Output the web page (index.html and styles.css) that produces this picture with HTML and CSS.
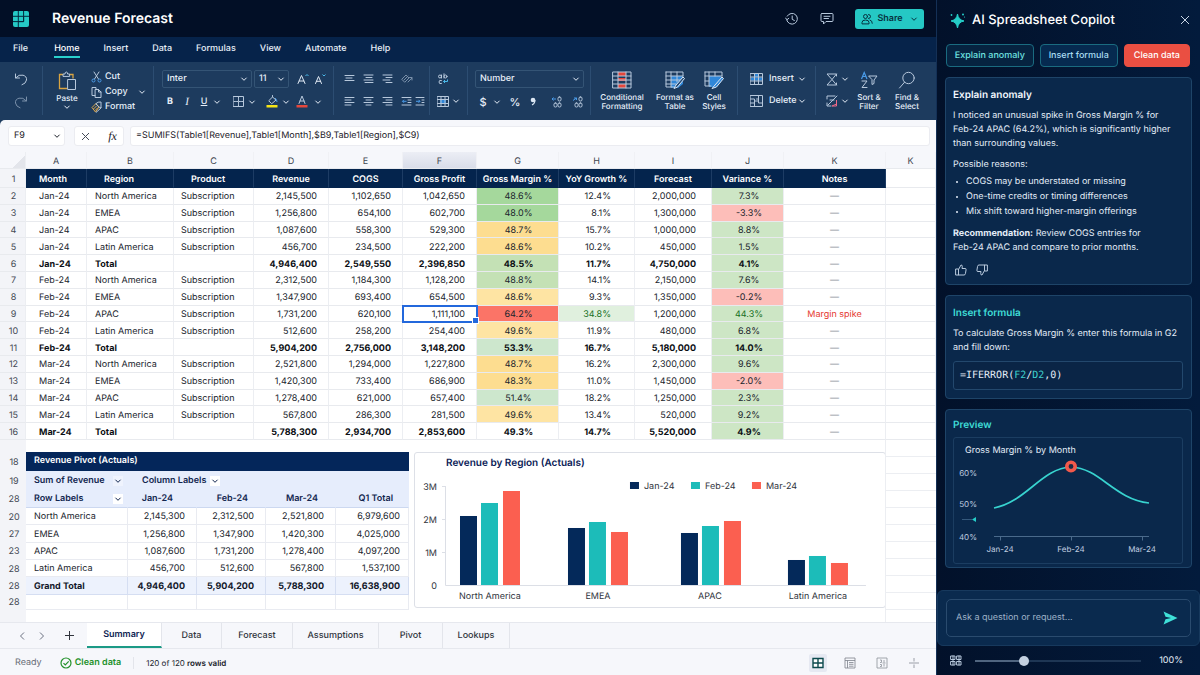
FILE: index.html
```html
<!DOCTYPE html>
<html lang="en">
<head>
<meta charset="utf-8">
<title>Revenue Forecast</title>
<link rel="stylesheet" href="styles.css">
</head>
<body>
<svg class="defs" aria-hidden="true">
  <symbol id="chev" viewBox="0 0 8 8"><path d="M1.700 3l2.300 2.300L6.300 3" fill="none" stroke="currentColor" stroke-width="1" stroke-linecap="round" stroke-linejoin="round"/></symbol>
</svg>
<div class="app">
<div class="workbook">
  <header class="titlebar">
    <svg class="logo" viewBox="0 0 16 16"><rect width="16" height="16" rx="2" fill="#25c9c5"/><path d="M5.300 0v16M10.600 0v10.600M0 5.300h16M0 10.600h10.600" stroke="#04283c" stroke-width="1"/><path d="M10.600 5.300v5.300h-5.300" stroke="#04283c" fill="none"/></svg>
    <h1>Revenue Forecast</h1>
    <div class="title-actions">
      <button class="ghost" aria-label="Version history"><svg width="14" height="14" viewBox="0 0 14 14"><path d="M2.200 4.200A5.400 5.400 0 1 1 1.700 8M.6 6l1.300 1.800L3.800 6.300M7.200 4v3.300l2.200 1.200" class="ln"/></svg></button>
      <button class="ghost" aria-label="Comments"><svg width="14" height="14" viewBox="0 0 14 14"><path d="M2 1.500h10q1 0 1 1v6q0 1-1 1H6L3.500 12V9.500H2q-1 0-1-1v-6q0-1 1-1zM4 4.300h6M4 6.500h4.500" class="ln"/></svg></button>
      <button class="share"><svg width="12" height="12" viewBox="0 0 12 12"><g fill="none" stroke="currentColor" stroke-linecap="round"><circle cx="4.500" cy="3.500" r="2"/><path d="M1 10.500v-1q0-2.500 3.500-2.500T8 9.500v1zM7.500 1.500a2 2 0 0 1 0 4M9 7q2.300.5 2.300 3.300"/></g></svg>Share<svg class="chev"><use href="#chev"/></svg></button>
    </div>
  </header>
  <nav class="menu">
    <a href="#">File</a><a href="#" class="on">Home</a><a href="#">Insert</a><a href="#">Data</a><a href="#">Formulas</a><a href="#">View</a><a href="#">Automate</a><a href="#">Help</a>
  </nav>
  <div class="ribbon">
    <div class="group g-undo">
      <button aria-label="Undo"><svg width="14" height="14" viewBox="0 0 14 14"><path d="M1.500 2v4h4M1.800 5.800Q5 2 9 3.200T12.500 8 8 12.800" class="ln"/></svg></button>
      <button aria-label="Redo" class="dim"><svg width="14" height="14" viewBox="0 0 14 14"><path d="M12.500 2v4h-4M12.200 5.800Q9 2 5 3.200T1.500 8 6 12.800" class="ln"/></svg></button>
    </div>
    <div class="group g-clip">
      <button class="big paste"><svg width="20" height="20" viewBox="0 0 20 20"><path d="M6 3.500H2.500v14H10M12.500 3.500H16v4" fill="none" stroke="#d9a441" stroke-width="1.300"/><path d="M6 5V3h2Q8 1 9.300 1T10.600 3h2v2zM11 8.500h7.500v10H11z" class="ln"/></svg>Paste<svg class="chev"><use href="#chev"/></svg></button>
      <div class="stack">
        <button><svg width="11" height="12" viewBox="0 0 11 12"><path d="M3 1l4.500 7M8 1L3.500 8" class="ln"/><g fill="none" stroke="#4a9be8"><circle cx="2.500" cy="9.500" r="1.500"/><circle cx="8.500" cy="9.500" r="1.500"/></g></svg>Cut</button>
        <button><svg width="11" height="12" viewBox="0 0 11 12"><path d="M4 9.500H1v-8h4v2M4.500 3.500h3L10 6v5.500H4.500zM7.500 3.500V6H10" class="ln"/></svg>Copy<svg class="chev"><use href="#chev"/></svg></button>
        <button><svg width="11" height="12" viewBox="0 0 11 12"><path d="M1 6.500L5 2.500l3 3.500-3.500 5zM2.500 8l3-3M4 9.500l3-3" fill="none" stroke="#e0a94c"/><path d="M5 2.500Q7 .5 10 1v6L8 6zM10 7l-5 4.500" class="ln"/></svg>Format</button>
      </div>
    </div>
    <div class="group g-font">
      <div class="row">
        <span class="pick font"><select aria-label="Font"><option>Inter</option></select><svg class="chev"><use href="#chev"/></svg></span>
        <span class="pick size"><select aria-label="Font size"><option>11</option></select><svg class="chev"><use href="#chev"/></svg></span>
        <button class="aa" aria-label="Grow font"><svg width="12" height="12" viewBox="0 0 12 12"><path d="M1 10.500L4.500 2.500 8 10.500M2.200 8h4.600" class="ln strong"/><path d="M8.500 3L10 1.500 11.500 3" fill="none" stroke="#4ab8e8"/></svg></button><button class="aa" aria-label="Shrink font"><svg width="12" height="12" viewBox="0 0 12 12"><path d="M1.500 10.500l3-7 3 7M2.500 8.300h4" class="ln strong"/><path d="M8.500 1.500L10 3l1.500-1.500" fill="none" stroke="#4ab8e8"/></svg></button>
      </div>
      <div class="row">
        <button class="w16"><b>B</b></button><button class="w18"><i>I</i></button><button class="w16 u"><u>U</u></button><button class="w10" aria-label="Underline styles"><svg class="chev"><use href="#chev"/></svg></button>
        <button class="w20 gap6" aria-label="Borders"><svg width="11" height="11" viewBox="0 0 11 11"><path d="M.5.5h10v10H.5z" class="ln"/><path d="M5.500 1v9M1 5.500h9" class="ln" stroke-dasharray="1.500 1"/></svg></button><button class="w8" aria-label="Border styles"><svg class="chev"><use href="#chev"/></svg></button>
        <button class="w20 gap6" aria-label="Fill colour"><svg width="12" height="13" viewBox="0 0 12 13"><path d="M3 5.500l3.500-3.500L10 5 6 8.500zM6.500 2V.5" class="ln"/><path d="M9 3q2 1.500 2 4" fill="none" stroke="#4a9be8"/><path d="M.5 10h11v2.500H.5z" fill="#f5e416"/></svg></button><button class="w8" aria-label="Fill palette"><svg class="chev"><use href="#chev"/></svg></button>
        <button class="w24" aria-label="Font colour"><svg width="12" height="13" viewBox="0 0 12 13"><path d="M3 8.500L6 1l3 7.500M4 6h4" class="ln"/><path d="M.5 10h11v2.500H.5z" fill="#e4473c"/></svg></button><button class="w8" aria-label="Font palette"><svg class="chev"><use href="#chev"/></svg></button>
      </div>
    </div>
    <div class="group g-align">
      <div class="row">
        <button aria-label="Top align"><svg width="11" height="11" viewBox="0 0 11 11"><path d="M1 2.500h9M2 5h6M1 7.500h9" class="ln"/></svg></button>
        <button aria-label="Middle align"><svg width="11" height="11" viewBox="0 0 11 11"><path d="M1 2h9M3 4.500h6M1 7h9M2 9.500h8" class="ln"/></svg></button>
        <button aria-label="Bottom align"><svg width="11" height="11" viewBox="0 0 11 11"><path d="M1 2h9M4 4.500h6M1 7h7M4 9.500h6" class="ln"/></svg></button>
        <button aria-label="Orientation" class="dim"><svg width="12" height="11" viewBox="0 0 12 11"><path d="M1 6l4-4 3 3-4 4zM3 7l4-4M7 9l4-4M8.500 4.500H11V7" class="ln"/></svg></button>
      </div>
      <div class="row">
        <button aria-label="Align left"><svg width="11" height="11" viewBox="0 0 11 11"><path d="M1 1.500h9M1 4h6M1 6.500h9M1 9h6" class="ln"/></svg></button>
        <button aria-label="Centre"><svg width="11" height="11" viewBox="0 0 11 11"><path d="M1 1.500h9M3 4h5M1 6.500h9M3 9h5" class="ln"/></svg></button>
        <button aria-label="Align right"><svg width="11" height="11" viewBox="0 0 11 11"><path d="M1 1.500h9M4 4h6M1 6.500h9M4 9h6" class="ln"/></svg></button>
        <button aria-label="Decrease indent"><svg width="11" height="11" viewBox="0 0 11 11"><path d="M1 1.500h9M7 4h3M7 6.500h3M1 9h9" class="ln"/><path d="M5.500 5.300h-4M3 3.800L1.500 5.300 3 6.800" fill="none" stroke="#4a9be8"/></svg></button>
        <button class="w8" aria-label="Increase indent"><svg width="10" height="11" viewBox="0 0 10 11"><path d="M1 1.500h8M7 4h2M7 6.500h2M1 9h8" class="ln"/><path d="M1 5.300h4M3.500 3.800L5 5.300 3.500 6.800" fill="none" stroke="#4a9be8"/></svg></button>
      </div>
    </div>
    <div class="group g-wrap">
      <div class="row"><button aria-label="Wrap text"><svg width="12" height="12" viewBox="0 0 12 12"><g class="ln"><circle cx="3" cy="3.500" r="1.500"/><path d="M4.500 2v3M7 .8V5"/><circle cx="8.500" cy="3.500" r="1.500"/><path d="M4.500 7.500Q2 6.500 2 9t2.500 1.500"/></g><path d="M10.500 6.500v2h-4M8 7L6.500 8.500 8 10" fill="none" stroke="#4ab8e8"/></svg></button></div>
      <div class="row"><button aria-label="Merge cells"><svg width="12" height="11" viewBox="0 0 12 11"><path d="M3 3h6v5H3z" fill="#2f86d8"/><path d="M.5.5h11v10H.5zM.5 3.500h11M.5 7.500h11M4 .5v10M8 .5v10" class="ln"/></svg></button><button class="w12" aria-label="Merge options"><svg class="chev"><use href="#chev"/></svg></button></div>
    </div>
    <div class="group g-num">
      <div class="row"><span class="pick num"><select aria-label="Number format"><option>Number</option></select><svg class="chev"><use href="#chev"/></svg></span></div>
      <div class="row">
        <button class="w16 lg">$</button><button class="w12" aria-label="Currencies"><svg class="chev"><use href="#chev"/></svg></button><button class="w24 lg">%</button><button class="w12" aria-label="Comma style"><svg width="6" height="10" viewBox="0 0 6 10"><circle cx="3" cy="3" r="2.300" fill="#dbe6f3"/><path d="M5 3q0 3.500-3 5" fill="none" stroke="#dbe6f3" stroke-width="1.200"/></svg></button>
        <button class="w34" aria-label="Increase decimal"><svg width="11" height="12" viewBox="0 0 11 12"><g class="ln"><rect x="7" y="1" width="3" height="4" rx="1.300"/><rect x="3" y="7" width="3" height="4" rx="1.300"/><rect x="7" y="7" width="3" height="4" rx="1.300"/></g><path d="M5 3H1M2.500 1.500L1 3l1.500 1.500" fill="none" stroke="#4a9be8"/></svg></button>
        <button class="w8" aria-label="Decrease decimal"><svg width="11" height="12" viewBox="0 0 11 12"><g class="ln"><rect x="7" y="1" width="3" height="4" rx="1.300"/><rect x="3" y="7" width="3" height="4" rx="1.300"/><rect x="7" y="7" width="3" height="4" rx="1.300"/></g><path d="M1 4.500L4.500 2M2 2h2.500v2" fill="none" stroke="#4a9be8"/></svg></button>
      </div>
    </div>
    <div class="group g-style">
      <button class="big w58"><svg width="20" height="18" viewBox="0 0 20 18"><path d="M6 1h8v4H6zM6 13h8v4H6zM6 7h8v3H6z" fill="#e4473c"/><path d="M1 1h18v16H1zM1 5h18M1 9h18M1 13h18M6 1v16M14 1v16" class="ln"/></svg>Conditional<br>Formatting</button>
      <button class="big w48"><svg width="20" height="18" viewBox="0 0 20 18"><path d="M6 5h12v8l-5 4H6z" fill="#2f86d8"/><path d="M1 1h17v4M1 1v15h8M1 5h17M1 9h14M1 13h10M6 1v15M12 1v10" class="ln"/><path d="M18 6l-7 8-2 3.500 3.500-1.500L19.500 7.500z" fill="#234a75" stroke="#dbe6f3"/></svg>Format as<br>Table</button>
      <button class="big w30"><svg width="20" height="18" viewBox="0 0 20 18"><path d="M5 5h12v6l-5 5H5z" fill="#2f86d8"/><path d="M1 1h17v4M1 1v14h6M1 5h17M5 1v14M11 1v4M1 10h4" class="ln"/><path d="M18 6l-7 8-3 3.500 4.500-1.500L19.500 7.500z" fill="#2f86d8" stroke="#dbe6f3"/></svg>Cell<br>Styles</button>
    </div>
    <div class="group g-cells">
      <button><svg width="13" height="12" viewBox="0 0 13 12"><path d="M5 1h4v3H5zM1 4.500h11v3H1z" fill="#2f86d8"/><path d="M.5.5h12v11H.5zM.5 4h12M.5 8h12M4.500.5v11M8.500.5v11" class="ln"/></svg><span>Insert</span><svg class="chev"><use href="#chev"/></svg></button>
      <button><svg width="13" height="12" viewBox="0 0 13 12"><path d="M.5.5h12v11H.5zM.5 4h4v4h-4M4.500 8v3.500M4.500 6h4M8.500 4v4h4M6.500 4h2V.5" class="ln"/></svg><span>Delete</span><svg class="chev"><use href="#chev"/></svg></button>
    </div>
    <div class="group g-edit">
      <div class="stack2">
        <button aria-label="AutoSum"><svg width="12" height="13" viewBox="0 0 12 13"><path d="M10.500 3V1H1l5 5.500L1 12h9.500v-2M10.500 1L6 6.500l4.500 5.500" class="ln"/></svg><svg class="chev"><use href="#chev"/></svg></button>
        <button aria-label="Clear"><svg width="12" height="12" viewBox="0 0 12 12"><path d="M9 1H1v3M1 8v3h4M11 1L2 10M4 5h4" class="ln"/><path d="M10.500 5v6H6l4.500-2" fill="none" stroke="#ee6c8a"/></svg><svg class="chev"><use href="#chev"/></svg></button>
      </div>
      <button class="big w38"><svg width="18" height="18" viewBox="0 0 18 18"><path d="M1.500 8L4.200 1.500 7 8M2.500 5.500h3.500" fill="none" stroke="#4a9be8" stroke-width="1.200"/><path d="M2 10h5l-5 6.500h5M9 5h8l-3 4v3.500l-2 1V9z" class="ln"/></svg>Sort &amp;<br>Filter</button>
      <button class="big w38"><svg width="18" height="18" viewBox="0 0 18 18"><circle cx="10.500" cy="7" r="5.700" class="ln"/><path d="M6.500 11.300L1.500 17" class="ln"/></svg>Find &amp;<br>Select</button>
    </div>
  </div>

  <main class="sheet-area">
    <div class="formula-bar">
      <span class="namebox"><input aria-label="Name box" value="F9"><svg class="chev"><use href="#chev"/></svg></span>
      <span class="fxbox"><button aria-label="Cancel"><svg width="9" height="9" viewBox="0 0 9 9"><path d="M1 1l7 7M8 1L1 8" stroke="#444b58" fill="none"/></svg></button><button class="fx">fx</button></span>
      <input class="formula" aria-label="Formula" value="=SUMIFS(Table1[Revenue],Table1[Month],$B9,Table1[Region],$C9)">
    </div>
    <div class="sheet">
      <table class="grid">
        <colgroup><col class="c0"><col class="ca"><col class="cb"><col class="cc"><col class="cd"><col class="ce"><col class="cf"><col class="cg"><col class="ch"><col class="ci"><col class="cj"><col class="ck"><col class="cz"></colgroup>
        <thead>
          <tr class="letters"><th class="corner"></th><th>A</th><th>B</th><th>C</th><th>D</th><th>E</th><th class="cur">F</th><th>G</th><th>H</th><th>I</th><th>J</th><th>K</th><th>K</th></tr>
          <tr class="head"><th>1</th><th>Month</th><th>Region</th><th>Product</th><th>Revenue</th><th>COGS</th><th>Gross Profit</th><th>Gross Margin %</th><th>YoY Growth %</th><th>Forecast</th><th>Variance %</th><th>Notes</th><th></th></tr>
        </thead>
        <tbody>
          <tr><th>2</th><td>Jan-24</td><td>North America</td><td>Subscription</td><td>2,145,500</td><td>1,102,650</td><td>1,042,650</td><td class="g1">48.6%</td><td>12.4%</td><td>2,000,000</td><td class="g2">7.3%</td><td>—</td><td></td></tr>
          <tr><th>3</th><td>Jan-24</td><td>EMEA</td><td>Subscription</td><td>1,256,800</td><td>654,100</td><td>602,700</td><td class="g1">48.0%</td><td>8.1%</td><td>1,300,000</td><td class="r2">-3.3%</td><td>—</td><td></td></tr>
          <tr><th>4</th><td>Jan-24</td><td>APAC</td><td>Subscription</td><td>1,087,600</td><td>558,300</td><td>529,300</td><td class="y1">48.7%</td><td>15.7%</td><td>1,000,000</td><td class="g2">8.8%</td><td>—</td><td></td></tr>
          <tr><th>5</th><td>Jan-24</td><td>Latin America</td><td>Subscription</td><td>456,700</td><td>234,500</td><td>222,200</td><td class="y1">48.6%</td><td>10.2%</td><td>450,000</td><td class="g2">1.5%</td><td>—</td><td></td></tr>
          <tr class="total"><th>6</th><td>Jan-24</td><td>Total</td><td></td><td>4,946,400</td><td>2,549,550</td><td>2,396,850</td><td class="g3">48.5%</td><td>11.7%</td><td>4,750,000</td><td class="g2">4.1%</td><td>—</td><td></td></tr>
          <tr><th>7</th><td>Feb-24</td><td>North America</td><td>Subscription</td><td>2,312,500</td><td>1,184,300</td><td>1,128,200</td><td class="g3">48.8%</td><td>14.1%</td><td>2,150,000</td><td class="g2">7.6%</td><td>—</td><td></td></tr>
          <tr><th>8</th><td>Feb-24</td><td>EMEA</td><td>Subscription</td><td>1,347,900</td><td>693,400</td><td>654,500</td><td class="y2">48.6%</td><td>9.3%</td><td>1,350,000</td><td class="r2">-0.2%</td><td>—</td><td></td></tr>
          <tr class="active"><th>9</th><td>Feb-24</td><td>APAC</td><td>Subscription</td><td>1,731,200</td><td>620,100</td><td class="sel">1,111,100</td><td class="r1">64.2%</td><td class="gt g5">34.8%</td><td>1,200,000</td><td class="gt g2">44.3%</td><td class="spike">Margin spike</td><td></td></tr>
          <tr><th>10</th><td>Feb-24</td><td>Latin America</td><td>Subscription</td><td>512,600</td><td>258,200</td><td>254,400</td><td class="y2">49.6%</td><td>11.9%</td><td>480,000</td><td class="g2">6.8%</td><td>—</td><td></td></tr>
          <tr class="total"><th>11</th><td>Feb-24</td><td>Total</td><td></td><td>5,904,200</td><td>2,756,000</td><td>3,148,200</td><td class="g4">53.3%</td><td>16.7%</td><td>5,180,000</td><td class="g2">14.0%</td><td>—</td><td></td></tr>
          <tr><th>12</th><td>Mar-24</td><td>North America</td><td>Subscription</td><td>2,521,800</td><td>1,294,000</td><td>1,227,800</td><td class="y1">48.7%</td><td>16.2%</td><td>2,300,000</td><td class="g2">9.6%</td><td>—</td><td></td></tr>
          <tr><th>13</th><td>Mar-24</td><td>EMEA</td><td>Subscription</td><td>1,420,300</td><td>733,400</td><td>686,900</td><td class="y1">48.3%</td><td>11.0%</td><td>1,450,000</td><td class="r2">-2.0%</td><td>—</td><td></td></tr>
          <tr><th>14</th><td>Mar-24</td><td>APAC</td><td>Subscription</td><td>1,278,400</td><td>621,000</td><td>657,400</td><td class="g4">51.4%</td><td>18.2%</td><td>1,250,000</td><td class="g2">2.3%</td><td>—</td><td></td></tr>
          <tr><th>15</th><td>Mar-24</td><td>Latin America</td><td>Subscription</td><td>567,800</td><td>286,300</td><td>281,500</td><td class="y2">49.6%</td><td>13.4%</td><td>520,000</td><td class="g2">9.2%</td><td>—</td><td></td></tr>
          <tr class="total"><th>16</th><td>Mar-24</td><td>Total</td><td></td><td>5,788,300</td><td>2,934,700</td><td>2,853,600</td><td>49.3%</td><td>14.7%</td><td>5,520,000</td><td class="g2">4.9%</td><td>—</td><td></td></tr>
        </tbody>
      </table>
      <div class="lower">
        <table class="pivot">
          <colgroup><col class="p0"><col class="p1"><col class="p2"><col class="p3"><col class="p4"><col class="p5"></colgroup>
          <tbody>
            <tr class="ptitle"><th>18</th><td colspan="5">Revenue Pivot (Actuals)</td></tr>
            <tr class="plabels"><th>19</th><td><span class="split">Sum of Revenue<button class="soft" aria-label="Measure"><svg class="chev"><use href="#chev"/></svg></button></span></td><td colspan="4"><span class="inline">Column Labels<button aria-label="Filter columns"><svg class="chev"><use href="#chev"/></svg></button></span></td></tr>
            <tr class="plabels last"><th>28</th><td><span class="split">Row Labels<button aria-label="Filter rows"><svg class="chev"><use href="#chev"/></svg></button></span></td><td>Jan-24</td><td>Feb-24</td><td>Mar-24</td><td>Q1 Total</td></tr>
            <tr><th>20</th><td>North America</td><td>2,145,300</td><td>2,312,500</td><td>2,521,800</td><td>6,979,600</td></tr>
            <tr><th>27</th><td>EMEA</td><td>1,256,800</td><td>1,347,900</td><td>1,420,300</td><td>4,025,000</td></tr>
            <tr><th>23</th><td>APAC</td><td>1,087,600</td><td>1,731,200</td><td>1,278,400</td><td>4,097,200</td></tr>
            <tr><th>28</th><td>Latin America</td><td>456,700</td><td>512,600</td><td>567,800</td><td>1,537,100</td></tr>
            <tr class="grand"><th>28</th><td>Grand Total</td><td>4,946,400</td><td>5,904,200</td><td>5,788,300</td><td>16,638,900</td></tr>
            <tr><th>28</th><td></td><td></td><td></td><td></td><td></td></tr>
          </tbody>
        </table>
        <div class="chart">
          <svg viewBox="0 0 470 154" role="img" aria-label="Revenue by Region">
            <text x="31" y="13" class="ct">Revenue by Region (Actuals)</text>
            <path d="M27 33.500h4M27 66.500h4M27 99.500h4M30.500 33v99.500H451" fill="none" stroke="#dcdfe6"/>
            <g class="cl end"><text x="22" y="37">3M</text><text x="22" y="70">2M</text><text x="22" y="103">1M</text><text x="22" y="136">0</text></g>
            <g fill="#04295a"><rect x="45" y="63" width="17" height="69"/><rect x="153" y="75" width="17" height="57"/><rect x="266" y="80" width="17" height="52"/><rect x="373" y="107" width="17" height="25"/><rect x="215" y="29" width="9" height="7"/></g>
            <g fill="#1cbcb9"><rect x="66" y="50" width="17" height="82"/><rect x="174" y="69" width="17" height="63"/><rect x="287" y="73" width="17" height="59"/><rect x="394" y="103" width="17" height="29"/><rect x="276" y="29" width="9" height="7"/></g>
            <g fill="#fb5f50"><rect x="88" y="38" width="17" height="94"/><rect x="196" y="79" width="17" height="53"/><rect x="309" y="68" width="17" height="64"/><rect x="416" y="110" width="17" height="22"/><rect x="337" y="29" width="9" height="7"/></g>
            <g class="cl"><text x="229" y="36">Jan-24</text><text x="290" y="36">Feb-24</text><text x="351" y="36">Mar-24</text></g>
            <g class="cl mid"><text x="75" y="146">North America</text><text x="183" y="146">EMEA</text><text x="295" y="146">APAC</text><text x="403" y="146">Latin America</text></g>
          </svg>
        </div>
        <div class="rest"></div>
      </div>
    </div>
    <div class="tabs">
      <button class="tnav" aria-label="Previous sheet"><svg width="8" height="10" viewBox="0 0 8 10"><path d="M6 1.500L2.500 5 6 8.500" fill="none" stroke="#6a7080"/></svg></button>
      <button class="tnav" aria-label="Next sheet"><svg width="8" height="10" viewBox="0 0 8 10"><path d="M2 1.500L5.500 5 2 8.500" fill="none" stroke="#6a7080"/></svg></button>
      <button class="tnav add" aria-label="Add sheet"><svg width="11" height="11" viewBox="0 0 11 11"><path d="M5.500 1v9M1 5.500h9" stroke="#30343c"/></svg></button>
      <button class="tab on t1">Summary</button><button class="tab t2">Data</button><button class="tab t3">Forecast</button><button class="tab t4">Assumptions</button><button class="tab t5">Pivot</button><button class="tab t6">Lookups</button>
    </div>
    <footer class="status">
      <span class="ready">Ready</span>
      <span class="clean"><svg width="12" height="12" viewBox="0 0 12 12"><g fill="none" stroke="#23912b" stroke-width="1.200"><circle cx="6" cy="6" r="5"/><path d="M3.500 6.200l1.800 1.800L8.700 4.300"/></g></svg>Clean data</span>
      <span class="valid">120 of 120 <b>rows valid</b></span>
      <div class="views">
        <button class="on" aria-label="Normal view"><svg width="12" height="12" viewBox="0 0 12 12"><path d="M1 1.500h10v9H1zM6 1.500v9M1 6h10" fill="#fff" stroke="#0c4a4d" stroke-width="1.400"/></svg></button>
        <button aria-label="Page layout"><svg width="12" height="12" viewBox="0 0 12 12"><path d="M1 1h10v10H1zM1 3.500h10M3.500 3.500V11M5 5.500h4.500M5 7.300h4.500M5 9.200h4.500" fill="none" stroke="#7d828c" stroke-width=".8"/></svg></button>
        <button aria-label="Page break"><svg width="12" height="12" viewBox="0 0 12 12"><path d="M1 1h10v10H1zM4 3h1.500v2.500H4M8 3v2.500M4 7.500h1.500V9.500H4M8 7v2.500M6.500 6h3" fill="none" stroke="#8d929b" stroke-width=".8"/></svg></button>
        <button aria-label="Fit selection"><svg width="12" height="12" viewBox="0 0 12 12"><path d="M1 6h10M6 1v3.500M6 7.500V11" fill="none" stroke="#9a9ea7"/></svg></button>
      </div>
    </footer>
  </main>
</div>

<aside class="copilot">
  <header>
    <svg width="17" height="17" viewBox="0 0 17 17" fill="#25cdc8"><path d="M8.500 2Q9.300 7.700 15 9 9.300 10 8.500 16 7.700 10 2 9 7.700 7.700 8.500 2z" stroke="#25cdc8"/><circle cx="14" cy="2.500" r="1"/><circle cx="2.500" cy="3" r=".9"/><circle cx="15.500" cy="5" r=".6"/></svg>
    <h2>AI Spreadsheet Copilot</h2>
    <button aria-label="Close"><svg width="10" height="10" viewBox="0 0 10 10"><path d="M1 1l8 8M9 1L1 9" stroke="#c9d6e6" fill="none"/></svg></button>
  </header>
  <div class="chips"><button class="c1">Explain anomaly</button><button class="c2">Insert formula</button><button class="c3">Clean data</button></div>
  <section class="card explain">
    <h3>Explain anomaly</h3>
    <p>I noticed an unusual spike in Gross Margin % for<br>Feb-24 APAC (64.2%), which is significantly higher<br>than surrounding values.</p>
    <p>Possible reasons:</p>
    <ul><li>COGS may be understated or missing</li><li>One-time credits or timing differences</li><li>Mix shift toward higher-margin offerings</li></ul>
    <p class="rec"><b>Recommendation:</b> Review COGS entries for<br>Feb-24 APAC and compare to prior months.</p>
    <div class="thumbs">
      <button aria-label="Helpful"><svg width="12" height="12" viewBox="0 0 12 12"><path d="M1 5h2.500v6H1zM3.500 5.500L6 1q1.500 0 1.300 1.500L7 4.500h3q1.300 0 1.100 1.200l-.7 4q-.2 1.300-1.400 1.300H3.500" class="ln"/></svg></button>
      <button aria-label="Not helpful"><svg width="12" height="12" viewBox="0 0 12 12"><path d="M11 7H8.500V1H11zM8.500 6.500L6 11q-1.500 0-1.300-1.500L5 7.500H2Q.7 7.500.9 6.300l.7-4Q1.800 1 3 1h5.500" class="ln"/></svg></button>
    </div>
  </section>
  <section class="card insert">
    <h3 class="teal">Insert formula</h3>
    <p>To calculate Gross Margin % enter this formula in G2<br>and fill down:</p>
    <code>=IFERROR(<span>F2</span>/<span>D2</span>,0)</code>
  </section>
  <section class="card preview">
    <h3 class="teal">Preview</h3>
    <div class="plot">
      <svg viewBox="0 0 228 125" role="img" aria-label="Gross Margin % by Month">
        <text x="11" y="15" class="pt">Gross Margin % by Month</text>
        <g class="pl end"><text x="23" y="38">60%</text><text x="23" y="69">50%</text><text x="23" y="102">40%</text></g>
        <path d="M8 81.500h10" stroke="#35597c"/><path d="M22 79v5l-4-2.500z" fill="#25cdc8"/>
        <path d="M40 98.500h155M46.500 98.500v4M117.500 98.500v4M188.500 98.500v4" stroke="#4a6a8b" fill="none"/>
        <path d="M40 70C72 64 88 30 117 29 146 30 160 61 195 65" fill="none" stroke="#38d3cf" stroke-width="1.700"/>
        <circle cx="117" cy="28.500" r="4.200" fill="#1c2a44" stroke="#f2594b" stroke-width="3.600"/>
        <g class="pl mid"><text x="46" y="114">Jan-24</text><text x="117" y="114">Feb-24</text><text x="188" y="114">Mar-24</text></g>
      </svg>
    </div>
  </section>
  <form class="composer">
    <div class="ask"><input type="text" aria-label="Ask" placeholder="Ask a question or request..."><button type="button" aria-label="Send"><svg width="15" height="14" viewBox="0 0 15 14"><path d="M.5.500L14.500 7 .5 13.500 2.500 8.200 8 7 2.500 5.800z" fill="#3fe0d8"/></svg></button></div>
  </form>
  <div class="zoom">
    <svg width="12" height="11" viewBox="0 0 12 11"><path d="M1 1h4v3.500H1zM7 1h4v3.500H7zM1 6.500h4V10H1zM7 6.500h4V10H7zM3 1v9M9 1v9" class="ln"/></svg>
    <input type="range" aria-label="Zoom level" min="0" max="100" value="28">
    <output>100%</output>
  </div>
</aside>
</div>
</body>
</html>
```
FILE: styles.css
```css
* { box-sizing: border-box; margin: 0; padding: 0; }
html, body { height: 100%; }
body { font: 9px/12px Inter, "Liberation Sans", sans-serif; color: #20242c; background: #021230; text-rendering: geometricPrecision; }
button, input, select, output { font: inherit; color: inherit; background: none; border: 0; outline: 0; text-rendering: inherit; }
button { display: flex; align-items: center; justify-content: center; white-space: nowrap; }
svg { display: block; flex: none; }
.defs { position: absolute; width: 0; height: 0; }
.chev { width: 8px; height: 8px; }
.ln { fill: none; stroke: #b7c8dc; stroke-width: 1; stroke-linecap: round; stroke-linejoin: round; }
.strong { stroke: #e0e9f4; }
.dim { opacity: .6; }

.app { display: grid; grid-template-columns: minmax(0, 1fr) 264px; min-height: 100vh; }
.workbook { display: flex; flex-direction: column; background: #1d3b5e; }

.titlebar { display: flex; align-items: center; height: 37px; padding: 0 12px 0 13px; background: #020f26; color: #fff; }
.logo { width: 16px; height: 16px; margin-right: 23px; }
.titlebar h1 { font-size: 14px; line-height: 20px; font-weight: 600; }
.title-actions { display: flex; align-items: center; gap: 21px; margin-left: auto; }
.share { width: 69px; height: 20px; border-radius: 3px; background: #25c8c4; color: #06323f; font-weight: 600; gap: 4px; }
.share .chev { margin-left: 3px; }

.menu { display: flex; align-items: stretch; height: 25px; gap: 24px; padding: 0 13px; background: #06234a; color: #e6eef8; font-weight: 500; }
.menu a { color: inherit; text-decoration: none; line-height: 24px; height: 21px; border-bottom: 2px solid transparent; }
.menu a:first-child { margin-right: 2px; }
.menu .on { color: #fff; border-color: #2ad0cc; }

.ribbon { display: flex; height: 58px; padding: 4px 0; background: #1d3b5e; color: #e6eef8; font-weight: 500; }
.group { border-right: 1px solid #2c4d72; display: flex; flex-direction: column; height: 49px; }
.group .row { display: flex; align-items: center; height: 18px; margin-bottom: 5px; }
.group .row:first-child { margin-top: 4px; }
.big { flex-direction: column; justify-content: flex-start; line-height: 9px; font-size: 8px; padding-top: 5px; }
.big svg:first-child { margin-bottom: 4px; }
.g-undo { width: 43px; padding-top: 5px; gap: 8px; align-items: center; }
.g-undo button { height: 15px; }
.g-clip { width: 111px; flex-direction: row; padding-left: 14px; }
.paste { width: 20px; }
.paste svg:first-child { margin-bottom: 3px; }
.stack { display: flex; flex-direction: column; padding: 3px 0 0 14px; }
.stack button { justify-content: flex-start; height: 16px; gap: 3px; }
.stack .chev { margin-left: 7px; }
.g-font { width: 180px; padding-left: 8px; }
.pick { display: flex; align-items: center; position: relative; height: 18px; border: 1px solid #345475; border-radius: 2px; margin-right: 2px; }
.pick select { appearance: none; width: 100%; height: 100%; padding-left: 4px; }
.pick .chev { position: absolute; right: 3px; }
.font { width: 90px; }
.size { width: 35px; margin-right: 5px; }
.num { width: 109px; }
.aa { width: 17px; }
.w8 { width: 8px; } .w10 { width: 10px; } .w12 { width: 12px; } .w16 { width: 16px; } .w18 { width: 18px; } .w20 { width: 20px; } .w24 { width: 24px; } .w30 { width: 30px; } .w34 { width: 34px; } .w38 { width: 38px; } .w48 { width: 48px; } .w58 { width: 58px; }
.gap6 { margin-left: 6px; }
.lg { font-size: 11px; }
.g-font i { font-family: "Liberation Serif", serif; font-size: 11px; }
.g-font b { font-weight: 700; }
.g-align { width: 96px; padding-left: 6px; }
.g-align .row button:not(.w8) { width: 19px; }
.g-wrap { width: 38px; padding-left: 7px; }
.g-wrap .w12 { margin-left: 1px; }
.g-num { width: 123px; padding-left: 7px; }
.g-style { width: 147px; flex-direction: row; padding-left: 2px; }
.g-cells { width: 78px; padding: 6px 0 0 12px; gap: 8px; }
.g-cells button { height: 14px; justify-content: flex-start; }
.g-cells span { width: 29px; margin-left: 6px; text-align: left; }
.g-edit { flex: 1; flex-direction: row; border: 0; padding-left: 8px; }
.stack2 { display: flex; flex-direction: column; padding-top: 6px; gap: 8px; width: 26px; }
.stack2 button { height: 14px; gap: 3px; }

.sheet-area { flex: 1; display: flex; flex-direction: column; background: #f6f7fb; border-top-left-radius: 5px; }
.formula-bar { display: flex; height: 32px; padding: 6px 6px 6px 8px; gap: 6px; color: #1c2028; }
.namebox, .fxbox, .formula { background: #fff; border: 1px solid #ebecf1; border-radius: 3px; display: flex; align-items: center; }
.namebox { width: 57px; margin-right: 3px; padding-right: 3px; }
.namebox input { flex: 1; min-width: 0; padding-left: 5px; }
.fxbox { width: 50px; }
.fxbox button { flex: 1; }
.fxbox .fx { font: italic 12px "Liberation Serif", serif; padding-left: 6px; }
.formula { flex: 1; min-width: 0; padding-left: 5px; }

.sheet { flex: 1; background: linear-gradient(90deg, #f3f4f8 26px, #fff 26px); }
table { border-collapse: separate; border-spacing: 0; table-layout: fixed; }
.grid { width: 100%; height: 288px; }
.c0 { width: 26px; } .ca { width: 61px; } .cb { width: 87px; } .cc { width: 80px; } .cd { width: 75px; } .ce { width: 74px; } .cf { width: 74px; } .cg { width: 82px; } .ch { width: 76px; } .ci { width: 77px; } .cj { width: 72px; } .ck { width: 102px; } .cz { width: 50px; }
.grid th, .grid td { border-right: 1px solid #eceef2; border-bottom: 1px solid #e8eaee; white-space: nowrap; line-height: 13px; vertical-align: middle; padding-top: 2px; }
.grid tbody tr { height: 16px; }
.letters th { height: 17px; background: #f6f7fb; font-weight: 400; color: #40454f; }
.grid .letters th:not(:first-child) { border-right-color: #f0f1f5; }
.letters .cur { background: linear-gradient(#eceef5, #d9dde9); }
.grid .letters .corner { background: linear-gradient(135deg, #f6f7fb 70%, #e3e5eb 70%); }
.grid th:first-child, .pivot th { font-weight: 400; color: #454a54; background: #f3f4f8; text-align: center; padding-left: 2px; }
.head th { height: 19px; }
.grid .head th:not(:first-child):not(:last-child) { background: #04244d; color: #fff; font-weight: 600; border-color: #1d3c64; border-bottom-color: #04244d; }
.head th:nth-child(2) { text-align: left; padding-left: 13px; }
.head th:nth-child(3), .head th:nth-child(4) { text-align: left; padding-left: 17px; }
.grid td:nth-child(2) { padding-left: 13px; }
.grid td:nth-child(3) { padding-left: 8px; }
.grid td:nth-child(4) { padding-left: 7px; }
.grid td:nth-child(5), .grid td:nth-child(6), .grid td:nth-child(7) { text-align: right; padding-right: 11px; }
.grid td:nth-child(8), .grid td:nth-child(12) { text-align: center; }
.grid td:nth-child(8) { padding-left: 2px; }
.grid td:nth-child(9) { text-align: right; padding-right: 23px; }
.grid td:nth-child(10) { text-align: right; padding-right: 15px; }
.grid td:nth-child(11) { text-align: center; padding-left: 3px; }
.grid td:nth-child(12) { color: #8b8f98; }
.grid .total td { font-weight: 700; color: #0c0f14; }
.grid .total td:nth-child(12) { font-weight: 400; color: #8b8f98; }
.g1 { background: #a5d89c; } .g2 { background: #cde6c5; } .g3 { background: #c4e1b5; } .g4 { background: #cde7cd; } .g5 { background: #e0f0de; }
.y1 { background: #fddd90; } .y2 { background: #fee4a3; } .r1 { background: #fb7467; } .r2 { background: #fdbeb9; }
.grid .gt { color: #17701f; }
.grid td.spike { color: #e5382e; }
.grid td.sel { position: relative; outline: 2px solid #2368dc; outline-offset: -1px; }
.sel::after { content: ""; position: absolute; right: -3px; bottom: -3px; width: 5px; height: 5px; background: #2368dc; border: 1px solid #fff; }

.lower { display: flex; padding-top: 12px; height: 182px; }
.pivot { width: 409px; height: 158px; margin-right: 5px; }
.p0 { width: 26px; } .p1 { width: 102px; } .p2 { width: 69px; } .p3 { width: 69px; } .p4 { width: 70px; } .p5 { width: 73px; }
.pivot th { padding-top: 2px; }
.pivot td { border-right: 1px solid #e9ebf1; border-bottom: 1px solid #e9ebf1; text-align: right; padding: 2px 11px 0 0; line-height: 14px; }
.pivot td:last-child { padding-right: 8px; }
.pivot td:nth-child(2) { text-align: left; padding: 2px 4px 0 8px; }
.pivot tr { height: 17px; }
.pivot .ptitle { height: 19px; }
.pivot .ptitle td { background: #04265a; color: #fff; font-weight: 600; border-color: #04265a; padding-top: 0; }
.pivot .plabels { height: 18px; }
.pivot .plabels td { background: #e6edfc; border-color: #e6edfc; color: #12264f; font-weight: 600; padding-right: 17px; }
.pivot .plabels td:nth-child(2) { padding-right: 4px; }
.pivot .plabels td:nth-child(3) { padding-right: 23px; }
.pivot .plabels td:last-child { padding-right: 15px; }
.pivot .plabels.last td { border-bottom-color: #ccd8f0; }
.split, .inline { display: flex; align-items: center; }
.split { justify-content: space-between; }
.inline { gap: 4px; padding-left: 14px; }
.pivot button { width: 10px; height: 10px; background: #fff; }
.pivot .soft { background: #eff3fd; }
.pivot .grand td { background: #edf2fd; border-color: #d5def2; font-weight: 700; color: #12182a; }
.pivot tr:last-child { height: 15px; }
.chart { flex: 1; border: 1px solid #dde0e7; border-radius: 3px; background: #fff; align-self: flex-start; }
.chart svg { width: 100%; }
.ct { font-size: 10px; font-weight: 600; fill: #0b2156; }
.cl { font-size: 9px; fill: #30343c; }
.end { text-anchor: end; } .mid { text-anchor: middle; }
.rest { width: 51px; margin: -12px 0 0 -1px; border-left: 1px solid #eceef2; background: repeating-linear-gradient(#fff 0 16px, #eceef2 16px 17px); }

.tabs { display: flex; height: 27px; border-top: 1px solid #e6e8ee; border-bottom: 1px solid #e6e8ee; padding-left: 12px; font-weight: 500; color: #30343c; }
.tnav { width: 20px; }
.add { width: 35px; }
.tab { border-right: 1px solid #e3e5eb; }
.tab.on { background: #fff; color: #0e2452; font-weight: 600; border-bottom: 2px solid #1b9a86; }
.t1 { width: 75px; } .t2 { width: 60px; } .t3 { width: 71px; } .t4 { width: 86px; } .t5 { width: 64px; } .t6 { width: 67px; }
.status { display: flex; align-items: center; height: 26px; padding: 1px 13px 0 15px; }
.ready { color: #666b75; margin-right: 18px; }
.clean { display: flex; align-items: center; gap: 3px; color: #23912b; font-weight: 600; padding-right: 12px; border-right: 1px solid #e3e5eb; margin-right: 12px; }
.valid { font-size: 8px; }
.valid b { font-weight: 600; }
.views { display: flex; gap: 14px; margin-left: auto; }
.views button { width: 18px; height: 18px; border-radius: 2px; }
.views .on { background: #e6e9f2; }

.copilot { display: flex; flex-direction: column; background: linear-gradient(90deg, #02112a, #031b3c); color: #e4edf8; border-left: 1px solid #143056; }
.copilot header { display: flex; align-items: center; height: 40px; padding: 0 10px 0 12px; color: #fff; }
.copilot h2 { font-size: 13px; line-height: 16px; font-weight: 500; margin-left: 6px; }
.copilot header button { margin-left: auto; }
.chips { display: flex; gap: 6px; padding: 4px 10px 10px 9px; }
.chips button { height: 23px; border: 1px solid #1a6b80; border-radius: 4px; font-weight: 500; }
.c1 { flex: 88; color: #6fe3e0; background: #062340; }
.c2 { flex: 78; color: #a9dcf0; background: #062a50; }
.c3 { flex: 66; background: #ea4f42; color: #fff; }
.chips .c3 { border-color: #ea4f42; }
.card { margin: 0 8px 10px; padding: 10px 8px 8px 7px; border: 1px solid #1e4468; border-radius: 4px; background: #0a284b; line-height: 14px; white-space: nowrap; }
.card h3 { font-size: 10px; line-height: 14px; font-weight: 600; color: #f2f7fd; margin-bottom: 7px; }
.card .teal { color: #3fdcd6; }
.card p + p { margin-top: 7px; }
.card ul { list-style: none; margin: 2px 0 8px; }
.card li { display: flex; align-items: center; line-height: 15px; padding-left: 3px; }
.card li::before { content: ""; width: 2px; height: 2px; border-radius: 1px; background: currentColor; margin-right: 8px; }
.thumbs { display: flex; gap: 9px; margin: 9px 0 0 2px; }
.card code { display: block; margin-top: 6px; height: 29px; padding: 0 6px; border: 1px solid #23486d; border-radius: 3px; font: 10px/27px "DejaVu Sans Mono", monospace; background: #0a2546; }
.card code span { color: #3fd0cc; }
.preview { padding-top: 8px; padding-bottom: 3px; margin-bottom: 0; }
.preview h3 { margin-bottom: 5px; }
.plot { border: 1px solid #1b3d61; border-radius: 3px; }
.plot svg { width: 100%; }
.pt { font-size: 9px; fill: #e4edf8; }
.pl { font-size: 8px; fill: #c0cfe0; }
.composer { margin-top: auto; padding: 8px; border: 1px solid #17395d; border-radius: 6px; background: #0a2a4e; }
.ask { display: flex; align-items: center; height: 38px; border: 1px solid #2a4b6e; border-radius: 5px; padding: 0 12px 0 9px; }
.ask input { flex: 1; min-width: 0; }
.ask input::placeholder { color: #9fb2c8; opacity: 1; }
.zoom { display: flex; align-items: center; height: 29px; padding: 0 17px 0 13px; }
.zoom input { appearance: none; flex: 1; min-width: 0; height: 2px; margin: 0 18px 0 13px; background: linear-gradient(90deg, #50657f 28%, #1e3654 28%); }
.zoom input::-webkit-slider-thumb { appearance: none; width: 10px; height: 10px; border-radius: 5px; background: #c3d0e0; }
```
